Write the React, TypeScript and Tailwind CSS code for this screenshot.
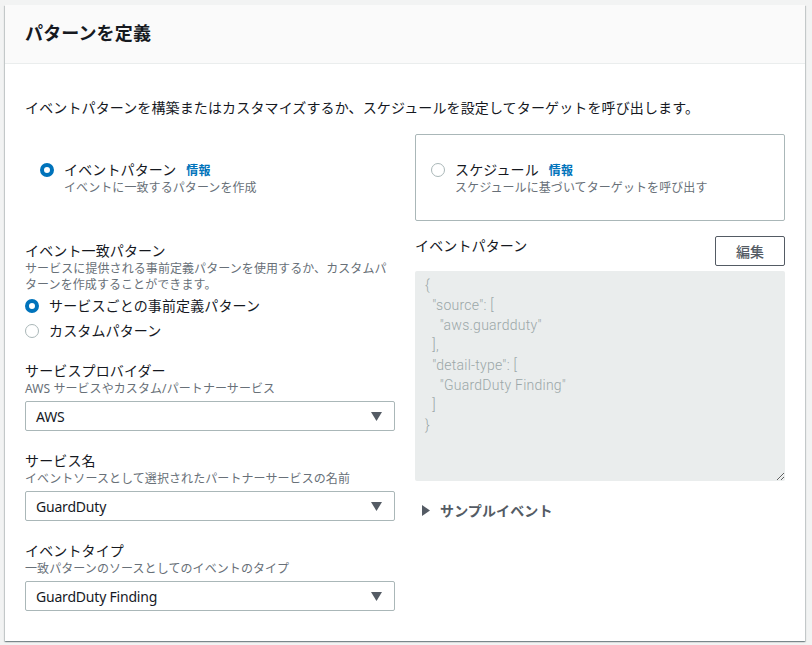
const pattern = `{
  "source": [
    "aws.guardduty"
  ],
  "detail-type": [
    "GuardDuty Finding"
  ]
}`;

function Radio({ checked }: { checked?: boolean }) {
  return checked ? (
    <span className="block w-[14px] h-[14px] shrink-0 rounded-full border-[4px] border-[#0073bb] bg-white" />
  ) : (
    <span className="block w-[14px] h-[14px] shrink-0 rounded-full border border-[#aab7b8] bg-white" />
  );
}

function Tile({ title, desc, checked }: { title: string; desc: string; checked?: boolean }) {
  return (
    <div className={checked ? 'h-[87px] px-[15px] flex items-center' : 'h-[87px] border border-[#aab7b8] rounded-[2px] px-[15px] flex items-center'}>
      <div className="flex gap-[10px]">
        <div className="pt-[3px]">
          <Radio checked={checked} />
        </div>
        <div>
          <div className="text-[14px] leading-[20px] tracking-[0.13px] text-[#16191f]">
            {title}
            <span className="ml-[10px] text-[12px] font-bold text-[#0073bb]">情報</span>
          </div>
          <div className="text-[12px] leading-[14px] tracking-[0.08px] text-[#687078]">{desc}</div>
        </div>
      </div>
    </div>
  );
}

function Field({ label, desc, value }: { label: string; desc: string; value: string }) {
  return (
    <div className="mt-[20px]">
      <div className="text-[14px] leading-[20px] tracking-[0.13px] text-[#16191f]">{label}</div>
      <div className="text-[12px] leading-[16px] tracking-[0.08px] text-[#687078]">{desc}</div>
      <div className="mt-[4px] h-[30px] border border-[#aab7b8] rounded-[2px] px-[10px] flex items-center justify-between bg-white">
        <span className="text-[14px] tracking-[-0.2px] text-[#16191f]">{value}</span>
        <svg width="11" height="9" viewBox="0 0 11 9" className="mr-[2px]">
          <path d="M0 0h11L5.500 9z" fill="#545b64" />
        </svg>
      </div>
    </div>
  );
}

export default function App() {
  return (
    <div className="min-h-[645px] bg-[#f2f3f3] pt-[5px] px-[5px] font-['Noto_Sans','Noto_Sans_CJK_JP',sans-serif]">
      <div className="w-[800px] h-[636px] bg-white shadow-[0_1px_1px_0_rgba(0,28,36,0.3),1px_1px_1px_0_rgba(0,28,36,0.15),-1px_1px_1px_0_rgba(0,28,36,0.15)]">
        <div className="h-[59px] bg-[#fafafa] border-b border-[#eaeded] px-[20px] pb-[2px] flex items-center">
          <h2 className="text-[18px] font-bold tracking-[0.13px] text-[#16191f]">パターンを定義</h2>
        </div>
        <div className="px-[20px]">
          <p className="mt-[34px] text-[14px] leading-[20px] tracking-[0.13px] text-[#16191f]">
            イベントパターンを構築またはカスタマイズするか、スケジュールを設定してターゲットを呼び出します。
          </p>
          <div className="mt-[16px] grid grid-cols-[370px_370px] gap-x-[20px]">
            <Tile checked title="イベントパターン" desc="イベントに一致するパターンを作成" />
            <Tile title="スケジュール" desc="スケジュールに基づいてターゲットを呼び出す" />
            <div className="pt-[20px]">
              <div className="text-[14px] leading-[20px] tracking-[0.13px] text-[#16191f]">イベント一致パターン</div>
              <div className="text-[12px] leading-[16px] tracking-[0.08px] text-[#687078]">
                サービスに提供される事前定義パターンを使用するか、カスタムパターンを作成することができます。
              </div>
              <div className="mt-[1px] -mb-px flex flex-col gap-[2px]">
                <div className="flex items-center gap-[10px] h-[23px]">
                  <Radio checked />
                  <span className="text-[14px] tracking-[0.13px] text-[#16191f]">サービスごとの事前定義パターン</span>
                </div>
                <div className="flex items-center gap-[10px] h-[23px]">
                  <Radio />
                  <span className="text-[14px] tracking-[0.13px] text-[#16191f]">カスタムパターン</span>
                </div>
              </div>
              <Field label="サービスプロバイダー" desc="AWS サービスやカスタム/パートナーサービス" value="AWS" />
              <Field label="サービス名" desc="イベントソースとして選択されたパートナーサービスの名前" value="GuardDuty" />
              <Field label="イベントタイプ" desc="一致パターンのソースとしてのイベントのタイプ" value="GuardDuty Finding" />
            </div>
            <div className="pt-[15px]">
              <div className="flex items-start justify-between">
                <span className="text-[14px] leading-[20px] tracking-[0.13px] text-[#16191f]">イベントパターン</span>
                <button className="w-[70px] h-[30px] border border-[#545b64] rounded-[2px] bg-white text-[14px] font-medium text-[#545b64]">
                  編集
                </button>
              </div>
              <textarea
                readOnly
                value={pattern}
                className="block mt-[5px] w-[370px] h-[210px] bg-[#eaeded] rounded-[2px] px-[10px] py-[4px] font-['Roboto',sans-serif] font-light text-[14px] leading-[20px] tracking-[0.25px] text-[#9ba7a8] outline-none"
              />
              <div className="mt-[19px] pl-[7px] flex items-center gap-[10px]">
                <svg width="8" height="11" viewBox="0 0 8 11">
                  <path d="M0 0l8 5.500-8 5.500z" fill="#545b64" />
                </svg>
                <span className="text-[14px] font-bold tracking-[0.13px] text-[#545b64]">サンプルイベント</span>
              </div>
            </div>
          </div>
        </div>
      </div>
    </div>
  );
}
